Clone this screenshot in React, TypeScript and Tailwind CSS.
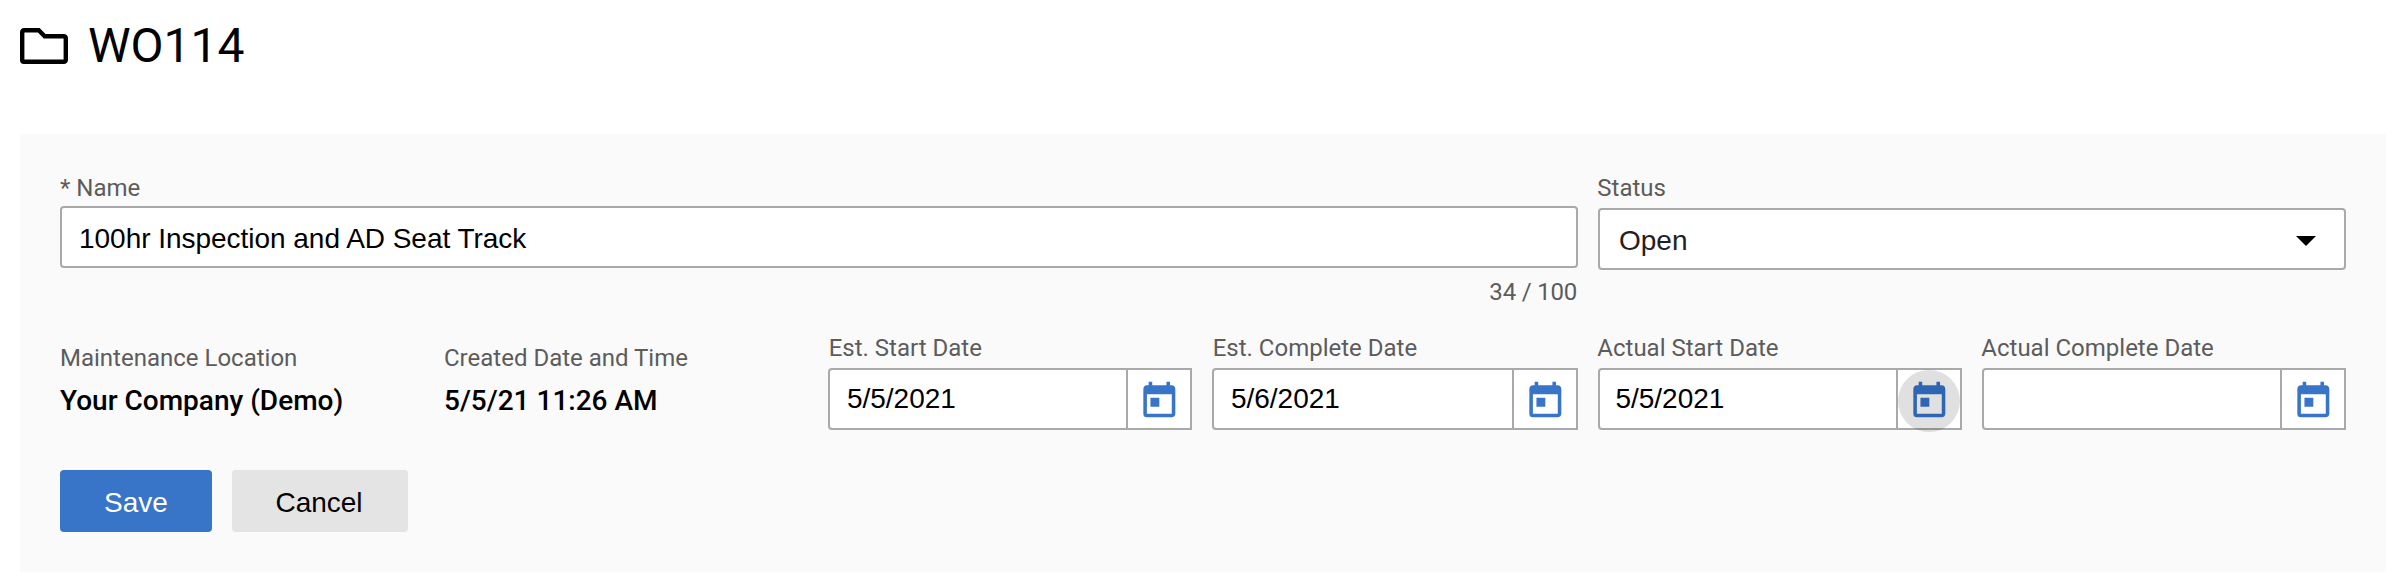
import { MdToday } from "react-icons/md";
import clsx from "clsx";

type DateFieldProps = {
  label: string;
  value?: string;
  hovered?: boolean;
};

const dateFields: DateFieldProps[] = [
  { label: "Est. Start Date", value: "5/5/2021" },
  { label: "Est. Complete Date", value: "5/6/2021" },
  { label: "Actual Start Date", value: "5/5/2021", hovered: true },
  { label: "Actual Complete Date" },
];

function FolderIcon() {
  return (
    <svg className="h-9 w-12" viewBox="0 0 48 36" fill="none" stroke="black" strokeWidth="4.4">
      <path d="M4 2.2H18.7L24.7 8.2H44a1.8 1.8 0 0 1 1.8 1.8V32a1.8 1.8 0 0 1-1.8 1.8H4a1.8 1.8 0 0 1-1.8-1.8V4a1.8 1.8 0 0 1 1.8-1.8z" />
    </svg>
  );
}

function DateField({ label, value, hovered }: DateFieldProps) {
  return (
    <div>
      <div className={clsx("h-[34px] text-2xl leading-[28px] text-[#5c5c5c]", label.startsWith("Actual") ? "-ml-[0.7px]" : "pl-[0.7px]")}>
        {label}
      </div>
      <div className="flex h-[62px]">
        <div
          className={clsx(
            "flex-1 rounded-l border-2 border-[#a9a9a9] bg-white font-['Liberation_Sans',sans-serif] text-[28px] leading-[58px] tracking-[-0.03px]",
            hovered ? "pl-[15.5px]" : "pl-[17px]",
          )}
        >
          {value}
        </div>
        <button
          type="button"
          className="flex h-[62px] w-16 items-start justify-start border-2 border-l-0 border-[#a9a9a9] bg-white"
        >
          <span
            className={clsx(
              "flex size-[62px] shrink-0 items-center justify-center rounded-full",
              hovered ? "bg-black/12 text-[#2f66b3]" : "text-[#3874c8]",
            )}
          >
            <MdToday className="size-[42.67px]" />
          </span>
        </button>
      </div>
    </div>
  );
}

function ReadOnlyField({ label, value }: { label: string; value: string }) {
  return (
    <div className="pt-[9px]">
      <div className="text-2xl leading-[30px] text-[#5c5c5c]">{label}</div>
      <div className="mt-[9px] text-[28px] font-medium leading-[38px]">{value}</div>
    </div>
  );
}

export default function App() {
  return (
    <main className="h-[588px] w-[2400px] bg-white pl-5 pr-[14px] font-[Roboto,sans-serif] text-black">
      <header className="flex h-[134px] items-start pt-7">
        <FolderIcon />
        <h1 className="ml-5 -mt-[10px] text-5xl leading-[56px]">WO114</h1>
      </header>

      <form className="h-[438px] bg-[#fafafa] px-10 pt-10">
        <div className="grid grid-cols-[364px_364px_364px_366px_364px_364px] gap-x-5">
          <div className="col-span-4">
            <div className="h-8 text-2xl leading-[28px] text-[#5c5c5c]">* Name</div>
            <div className="h-[62px] rounded border-2 border-[#a9a9a9] bg-white px-[17px] font-['Liberation_Sans',sans-serif] text-[28px] leading-[62px] tracking-[-0.03px]">
              100hr Inspection and AD Seat Track
            </div>
            <div className="h-[66px] pr-px pt-[10px] text-right text-2xl leading-[28px] tracking-[-0.2px] text-[#5c5c5c]">
              34 / 100
            </div>
          </div>
          <div className="col-span-2">
            <div className="-ml-[0.7px] h-[34px] text-2xl leading-[28px] text-[#5c5c5c]">Status</div>
            <div className="flex h-[62px] items-center justify-between rounded border-2 border-[#a9a9a9] bg-white pl-[19px] pr-7 pt-[3px] font-['Liberation_Sans',sans-serif] text-[28px] text-[#212121]">
              Open
              <svg className="h-[10px] w-5" viewBox="0 0 20 10">
                <path d="M0 0h20L10 10z" fill="black" />
              </svg>
            </div>
          </div>

          <ReadOnlyField label="Maintenance Location" value="Your Company (Demo)" />
          <ReadOnlyField label="Created Date and Time" value="5/5/21 11:26 AM" />
          {dateFields.map((field) => (
            <DateField key={field.label} {...field} />
          ))}
        </div>

        <div className="mt-10 flex gap-5 font-['Liberation_Sans',sans-serif] text-[28px]">
          <button type="button" className="h-[62px] w-[152px] rounded bg-[#3874c8] pt-[3px] text-white">
            Save
          </button>
          <button type="button" className="h-[62px] w-[176px] rounded bg-[#e4e4e4] pr-0.5 pt-[3px]">
            Cancel
          </button>
        </div>
      </form>
    </main>
  );
}
